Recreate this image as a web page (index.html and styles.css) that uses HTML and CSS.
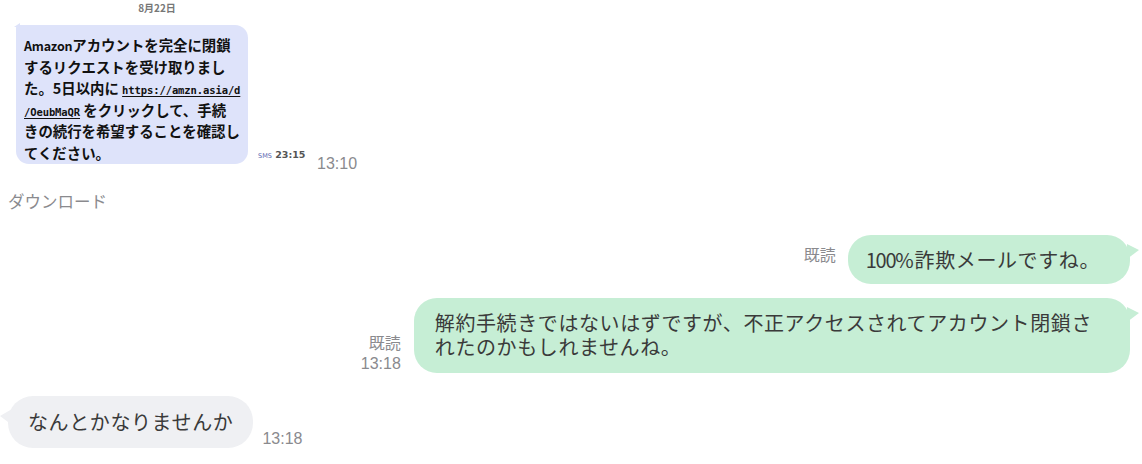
FILE: index.html
```html
<!DOCTYPE html>
<html lang="ja">
<head>
  <meta charset="UTF-8" />
  <meta name="viewport" content="width=device-width, initial-scale=1.0"/>
  <title>トーク</title>
  <link rel="stylesheet" href="styles.css">
</head>
<body>
  <div class="chat">

    <div class="row row-shot">
      <div class="shot">
        <div class="shot-date">8月22日</div>
        <div class="shot-body">
          <div class="sms-bubble">
            <span class="latin">Amazon</span>アカウントを完全に閉鎖<br>
            するリクエストを受け取りまし<br>
            た。5日以内に <span class="link">https://amzn.asia/d</span><br>
            <span class="link">/OeubMaQR</span> をクリックして、手続<br>
            きの続行を希望することを確認し<br>
            てください。
          </div>
          <div class="sms-meta"><span class="sms-tag">SMS</span> 23:15</div>
        </div>
      </div>
      <div class="time">13:10</div>
    </div>

    <div class="file-label">ダウンロード</div>

    <div class="row row-out first-out">
      <div class="meta meta-top">既読</div>
      <div class="bubble bubble-out"><span class="num">100%</span>詐欺メールですね。</div>
    </div>

    <div class="row row-out second-out">
      <div class="meta">
        <span>既読</span>
        <span class="time">13:18</span>
      </div>
      <div class="bubble bubble-out bubble-wide">解約手続きではないはずですが、不正アクセスされてアカウント閉鎖さ<br>れたのかもしれませんね。</div>
    </div>

    <div class="row row-in">
      <div class="bubble bubble-in">なんとかなりませんか</div>
      <div class="time">13:18</div>
    </div>

  </div>
</body>
</html>
```

FILE: styles.css
```css
* { box-sizing: border-box; }

body {
  margin: 0;
  background: #fff;
  font-family: "Noto Sans CJK JP", "Noto Sans", sans-serif;
  color: #3a3a3a;
}

.chat {
  display: flex;
  flex-direction: column;
}

.row {
  display: flex;
}

.time {
  font-family: "Liberation Sans", Arial, sans-serif;
  font-size: 16px;
  line-height: 18px;
  color: #8a8a8e;
}

/* forwarded sms screenshot */
.row-shot {
  align-items: flex-end;
}

.shot {
  width: 310px;
  padding-bottom: 9px;
}

.shot-date {
  text-align: center;
  font-size: 10px;
  line-height: 16px;
  font-weight: bold;
  color: #777;
  padding-left: 4px;
}

.shot-body {
  display: flex;
  align-items: flex-end;
  padding-left: 16px;
  margin-top: 9px;
}

.sms-bubble {
  position: relative;
  width: 232px;
  height: 139px;
  padding: 9px 6px 0 8px;
  background: #dee3fa;
  border-radius: 3px 13px 13px 13px;
  font-size: 14.4px;
  line-height: 21.5px;
  font-weight: bold;
  color: #111;
  white-space: nowrap;
}

.sms-bubble::before {
  content: "";
  position: absolute;
  left: -2px;
  top: -2px;
  border-right: 6px solid #dee3fa;
  border-top: 4px solid transparent;
}

.latin {
  font-size: 12.5px;
  line-height: 1;
  letter-spacing: -0.2px;
}

.link {
  font-family: "DejaVu Sans Mono", monospace;
  font-size: 10.5px;
  line-height: 1;
  letter-spacing: -0.1px;
  text-decoration: underline;
  text-underline-offset: 2px;
}

.sms-meta {
  margin-left: 10px;
  font-family: "DejaVu Sans", sans-serif;
  font-size: 9.5px;
  line-height: 12px;
  font-weight: bold;
  color: #555;
  margin-bottom: 2px;
}

.sms-tag {
  font-size: 6.5px;
  font-weight: normal;
  color: #5b66b0;
}

.row-shot > .time {
  margin-left: 7px;
}

.file-label {
  margin-top: 16px;
  padding-left: 8px;
  font-size: 16.5px;
  line-height: 24px;
  color: #8a8a8e;
}

/* bubbles */
.bubble {
  position: relative;
  font-size: 20px;
  letter-spacing: 0.6px;
  line-height: 25px;
  border-radius: 23px;
}

.num {
  letter-spacing: -1.2px;
  margin-right: 2px;
}

.row-out {
  justify-content: flex-end;
  padding-right: 12px;
}

.bubble-out {
  background: #c6eed5;
  padding: 12px 30px 12px 18px;
}

.bubble-out::after {
  content: "";
  position: absolute;
  right: -9px;
  top: 9px;
  border-left: 12px solid #c6eed5;
  border-top: 6px solid transparent;
  border-bottom: 9px solid transparent;
}

.first-out {
  margin-top: 22px;
}

.second-out {
  margin-top: 14px;
}

.bubble-wide {
  padding: 13px 38px 14px 21px;
  line-height: 24px;
}

.meta {
  display: flex;
  flex-direction: column;
  align-items: flex-end;
  margin-right: 13px;
  align-self: flex-end;
  margin-bottom: -2px;
  font-size: 16px;
  line-height: 22px;
  color: #8a8a8e;
}

.meta .time {
  line-height: 22px;
}

.meta-top {
  align-self: flex-start;
  margin-top: 9px;
  margin-right: 12px;
  margin-bottom: 0;
  line-height: 20px;
}

.row-in {
  margin-top: 23px;
  padding-left: 8px;
  align-items: flex-end;
}

.bubble-in {
  background: #eff0f3;
  padding: 13px 20px;
  line-height: 26px;
  border-radius: 25px;
}

.bubble-in::before {
  content: "";
  position: absolute;
  left: -8px;
  top: 13px;
  border-right: 12px solid #eff0f3;
  border-top: 7px solid transparent;
  border-bottom: 9px solid transparent;
}

.row-in .time {
  margin-left: 9px;
}
```
